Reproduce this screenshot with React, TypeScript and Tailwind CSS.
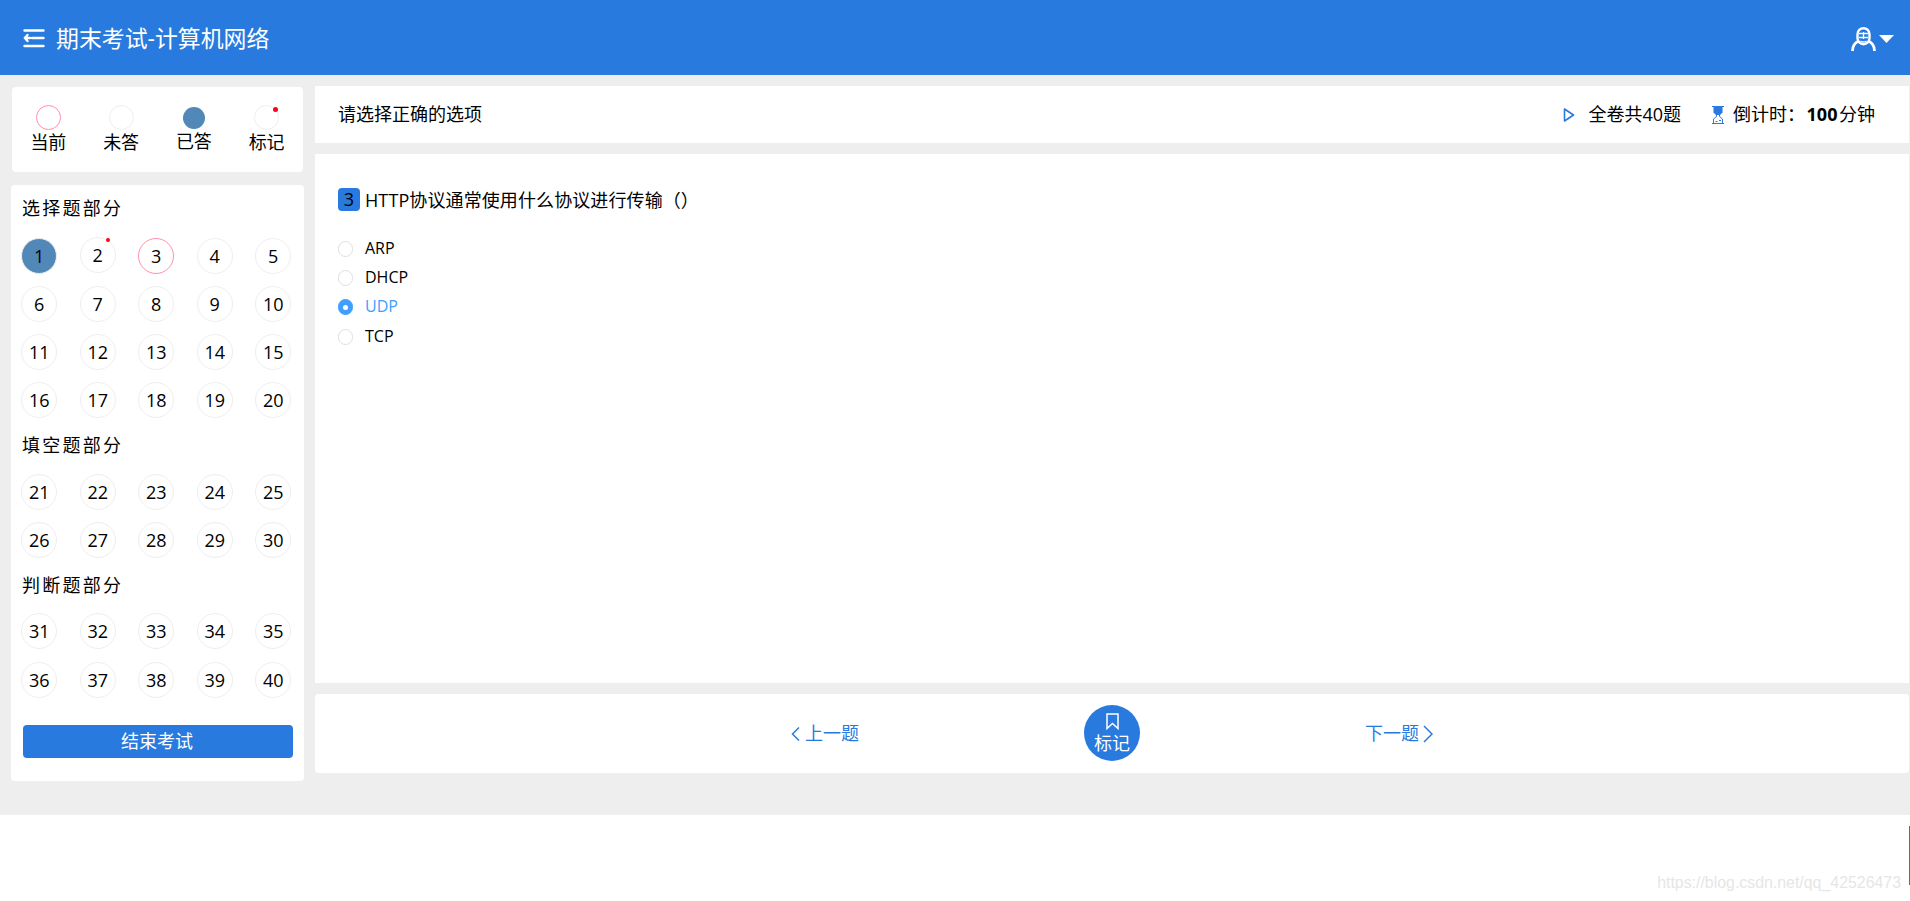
import { useState } from "react";

const sections = [
    { title: "选择题部分", from: 1, to: 20, titleClass: "h-[47px] pb-0.5", rowClass: "" },
    { title: "填空题部分", from: 21, to: 30, titleClass: "h-[44px] pb-0.5", rowClass: "" },
    { title: "判断题部分", from: 31, to: 40, titleClass: "h-[43px] pb-0.5", rowClass: "gap-y-px" },
];

const options = ["ARP", "DHCP", "UDP", "TCP"];

function MenuIcon() {
    return (
        <svg className="w-[22px] h-5" viewBox="0 0 22 20" fill="none" stroke="white" strokeWidth={2.4} strokeLinecap="round" strokeLinejoin="round">
            <path d="M1.500 2.500h19M9 10h11.500M1.500 18h19" />
            <path d="M4.500 7L1.800 10l2.700 3M2 10h5" />
        </svg>
    );
}

function UserIcon() {
    return (
        <svg className="w-[25px] h-6" viewBox="0 0 25 24" fill="none" stroke="white">
            <rect x="6.500" y="1.200" width="12" height="16" rx="6" strokeWidth={2.400} />
            <path d="M8 6.500h9M8 10.500h9M12.500 5v7M9.500 14q3 2 6 0" strokeWidth={1.300} />
            <path d="M1.500 24C1.500 19.500 3.500 16 7.500 14.300M23.500 24c0-4.500-2-8-6-9.700" strokeWidth={2.800} />
        </svg>
    );
}

function HourglassIcon() {
    return (
        <svg className="w-3 h-[18px]" viewBox="0 0 12 18" fill="none" stroke="#287ade">
            <path d="M0 .5h12M0 17.500h12" />
            <path d="M1.500 1h9v5.500L8 9H4L1.500 6.500z" fill="#287ade" stroke="none" />
            <path d="M4.500 9v1.500L1.500 13v4M7.500 9v1.500l3 2.500v4M3.500 15.500h2M7 14.500h2" />
        </svg>
    );
}

function RedDot({ className }: { className: string }) {
    return <span className={`absolute rounded-full bg-[#ff0018] ${className}`} />;
}

function NumberCell({ num, onClick }: { num: number; onClick: () => void }) {
    let look = "border-[#eee]";
    if (num === 1) look = "border-[#eee] bg-[#5188b8]";
    if (num === 2) look = "border-[#eee] -mt-0.5";
    if (num === 3) look = "border-[#ff90aa]";

    return (
        <div className="h-12 flex items-center justify-center">
            <button onClick={onClick} className={`relative w-9 h-9 rounded-full border flex items-center justify-center leading-none ${look}`}>
                {num}
                {num === 2 && <RedDot className="w-1 h-1 top-0 right-[5px]" />}
            </button>
        </div>
    );
}

export default function App() {
    const [answer, setAnswer] = useState("UDP");
    const [current, setCurrent] = useState(3);

    return (
        <div className="relative h-[901px] overflow-hidden bg-white text-black text-[18px] font-normal font-['Open_Sans','Noto_Sans_CJK_SC',sans-serif]">
            {/* Header */}
            <header className="h-[75px] bg-[#287ade] flex items-center justify-between pl-[23px] pr-4 text-white">
                <div className="flex items-center gap-[11px] pt-px">
                    <MenuIcon />
                    <h1 className="text-[22.900px] leading-none pt-0.5">期末考试-计算机网络</h1>
                </div>
                <div className="flex items-center gap-[3px] pt-0.5">
                    <UserIcon />
                    <svg className="w-[15px] h-2" viewBox="0 0 15 8" fill="white">
                        <path d="M0 0h15L7.500 8z" />
                    </svg>
                </div>
            </header>

            <main className="h-[740px] bg-[#eee] flex gap-[11px] pl-[11px] pr-px pt-[11px]">
                {/* Answer sheet */}
                <aside className="w-[293px] shrink-0">
                    <ul className="mx-px mt-px h-[85px] rounded bg-white grid grid-cols-4 pt-[18px] leading-5">
                        <li className="flex flex-col items-center">
                            <span className="w-[25px] h-[25px] rounded-full border border-[#ff90aa]" />
                            <span className="mt-0.5">当前</span>
                        </li>
                        <li className="flex flex-col items-center">
                            <span className="w-[25px] h-[25px] rounded-full border border-[#eee]" />
                            <span className="mt-0.5">未答</span>
                        </li>
                        <li className="flex flex-col items-center pt-0.5">
                            <span className="w-[22px] h-[22px] rounded-full bg-[#5188b8]" />
                            <span className="mt-0.5">已答</span>
                        </li>
                        <li className="flex flex-col items-center">
                            <span className="relative w-[25px] h-[25px] rounded-full border border-[#eee]">
                                <RedDot className="w-[5px] h-[5px] top-px right-0" />
                            </span>
                            <span className="mt-0.5">标记</span>
                        </li>
                    </ul>

                    <div className="mt-[13px] h-[596px] rounded bg-white">
                        {sections.map((s) => (
                            <div key={s.title}>
                                <p className={`pl-[11px] flex items-center tracking-[2.250px] leading-none ${s.titleClass}`}>{s.title}</p>
                                <div className={`grid grid-cols-5 w-[293px] -ml-px pr-[0.500px] ${s.rowClass}`}>
                                    {Array.from({ length: s.to - s.from + 1 }, (_, i) => (
                                        <NumberCell key={i} num={s.from + i} onClick={() => setCurrent(s.from + i)} />
                                    ))}
                                </div>
                            </div>
                        ))}
                        <button className="block ml-3 mt-[21px] w-[270px] h-[33px] pr-0.5 rounded bg-[#287ade] text-white leading-[33px]">
                            结束考试
                        </button>
                    </div>
                </aside>

                {/* Question area */}
                <section className="flex-1">
                    <div className="h-[57px] bg-white flex items-center justify-between pl-[23px] pr-[34px]">
                        <p>请选择正确的选项</p>
                        <div className="flex items-center">
                            <svg className="w-3 h-[14px] mr-[13px]" viewBox="0 0 12 14" fill="none" stroke="#287ade" strokeWidth={1.600} strokeLinejoin="round">
                                <path d="M1.500 1v12L10.500 7z" />
                            </svg>
                            <span className="mr-[31px]">全卷共40题</span>
                            <HourglassIcon />
                            <span className="ml-[9px]">倒计时：</span>
                            <b className="font-bold w-[34px] text-center">100</b>
                            <span>分钟</span>
                        </div>
                    </div>

                    <div className="mt-[11px] h-[529px] bg-white pl-[23px] pt-[34px]">
                        <p className="flex items-center h-[23px]">
                            <span className="w-[22px] h-[23px] mr-[5px] rounded bg-[#287ade] flex items-center justify-center">{current}</span>
                            <span className="pt-0.5 tracking-[0.100px]">HTTP协议通常使用什么协议进行传输（）</span>
                        </p>
                        <div className="mt-[22px] text-[16px]">
                            {options.map((o) => (
                                <button key={o} onClick={() => setAnswer(o)} className={`flex items-center h-[29.400px] leading-none ${answer === o ? "text-[#409eff]" : ""}`}>
                                    <span className={`w-[15px] h-4 mt-0.5 mr-3 rounded-full border flex items-center justify-center ${answer === o ? "border-[#409eff] bg-[#409eff]" : "border-[#dcdfe6]"}`}>
                                        {answer === o && <span className="w-[5px] h-[5px] rounded-full bg-white" />}
                                    </span>
                                    {o}
                                </button>
                            ))}
                        </div>
                    </div>

                    {/* Prev / mark / next */}
                    <div className="mt-[11px] h-[79px] rounded bg-white flex items-center justify-center gap-[225px] text-[#287ade]">
                        <button className="flex items-center gap-[5px]">
                            <svg className="w-[9px] h-4" viewBox="0 0 9 16" fill="none" stroke="currentColor" strokeWidth={1.500}>
                                <path d="M8 1.500L1.500 8 8 14.500" />
                            </svg>
                            上一题
                        </button>
                        <button className="w-14 h-14 mb-px rounded-full bg-[#287ade] text-white flex flex-col items-center pt-2">
                            <svg className="w-[13px] h-[17px]" viewBox="0 0 13 17" fill="none" stroke="currentColor" strokeWidth={1.500}>
                                <path d="M1 1h11v14.500L6.500 10.500 1 15.500z" />
                            </svg>
                            <span className="mt-[3px] leading-5">标记</span>
                        </button>
                        <button className="flex items-center gap-1">
                            下一题
                            <svg className="w-[10px] h-[18px]" viewBox="0 0 10 18" fill="none" stroke="currentColor" strokeWidth={1.500}>
                                <path d="M1 1l8 8-8 8" />
                            </svg>
                        </button>
                    </div>
                </section>
            </main>

            <span className="absolute right-[9px] bottom-2.5 text-[15.900px] leading-none text-[#e6e6e6] font-['Liberation_Sans',sans-serif]">
                https://blog.csdn.net/qq_42526473
            </span>
            <span className="absolute right-0 bottom-4 w-px h-[59px] bg-[#6b6b6b]" />
        </div>
    );
}
